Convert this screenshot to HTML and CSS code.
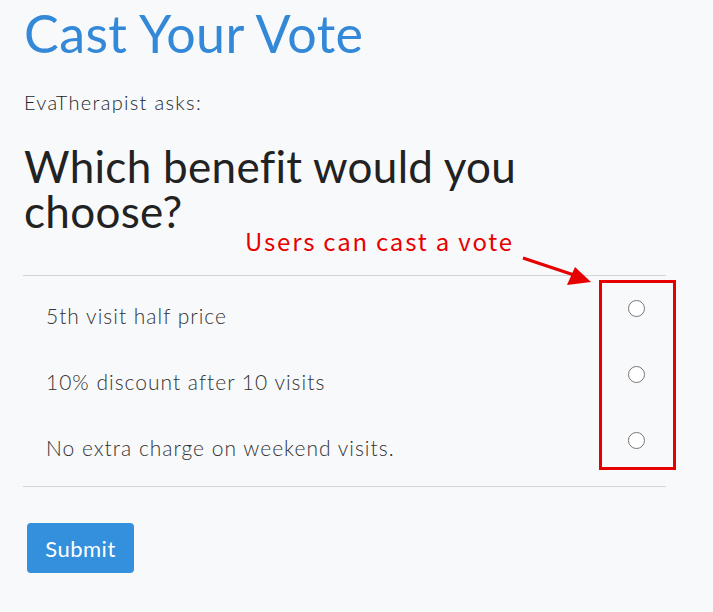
FILE: index.html
```html
<!DOCTYPE html>
<html>
<head>
<meta charset="utf-8">
<link rel="stylesheet" href="styles.css">
</head>
<body>
<div class="page">
  <h1 class="title">Cast Your Vote</h1>
  <p class="asker">EvaTherapist asks:</p>
  <h2 class="question"><span class="q-line">Which benefit would you</span> <span class="q-line">choose?</span></h2>
  <div class="options">
    <label class="option"><span class="opt-text">5th visit half price</span><span class="radio"></span></label>
    <label class="option"><span class="opt-text">10% discount after 10 visits</span><span class="radio"></span></label>
    <label class="option"><span class="opt-text">No extra charge on weekend visits.</span><span class="radio"></span></label>
  </div>
  <button class="submit">Submit</button>

  <div class="note">Users can cast a vote</div>
  <svg class="arrow" width="80" height="40" viewBox="0 0 80 40">
    <line x1="2" y1="2" x2="56" y2="20" stroke="#e60000" stroke-width="3"/>
    <polygon points="70,26 46,29 54,11" fill="#e60000"/>
  </svg>
  <div class="callout"></div>
</div>
</body>
</html>
```
FILE: styles.css
```css
html, body {
  margin: 0;
  padding: 0;
  background: #f8f9fa;
}
body {
  font-family: Lato, "Open Sans", sans-serif;
  color: #212529;
  width: 713px;
  height: 612px;
  overflow: hidden;
}
.page {
  position: relative;
  padding: 0 47px 0 23px;
}
.title {
  margin: 0;
  padding-top: 2px;
  font-weight: 400;
  font-size: 52px;
  line-height: 62px;
  color: #3488d8;
  letter-spacing: 0.4px;
  padding-left: 1px;
}
.asker {
  margin: 26px 0 0 1px;
  font-size: 20px;
  line-height: 24px;
  font-weight: 300;
  letter-spacing: 1.3px;
}
.question {
  margin: 30px 0 0 1px;
  font-weight: 400;
  font-size: 44px;
  line-height: 45px;
  color: #222;
  letter-spacing: 0.3px;
}
.q-line {
  display: block;
  width: max-content;
}
.options {
  margin-top: 41px;
  border-top: 1px solid #d2d4d6;
  border-bottom: 1px solid #d2d4d6;
  padding: 6px 0;
}
.option {
  display: flex;
  align-items: center;
  justify-content: space-between;
  height: 66px;
  padding-left: 23px;
  padding-right: 21px;
}
.opt-text {
  font-size: 21px;
  font-weight: 300;
  color: #333;
  letter-spacing: 1px;
}
.radio {
  width: 17px;
  height: 17px;
  box-sizing: border-box;
  border: 1px solid #767676;
  border-radius: 50%;
  background: #fff;
  margin-top: -14px;
}
.submit {
  margin: 36px 0 0 4px;
  width: 107px;
  height: 50px;
  border: none;
  border-radius: 4px;
  background: #3490dc;
  color: #fff;
  font-family: Lato, sans-serif;
  font-size: 22px;
  letter-spacing: 0.5px;
  padding: 0;
}
.note {
  position: absolute;
  left: 245px;
  top: 224px;
  font-family: "Noto Sans CJK JP", sans-serif;
  color: #e60000;
  font-size: 24px;
  line-height: 34px;
  letter-spacing: 1.8px;
}
.arrow {
  position: absolute;
  left: 521px;
  top: 256px;
}
.callout {
  position: absolute;
  left: 599px;
  top: 280px;
  width: 71px;
  height: 184px;
  border: 3px solid #e60000;
}
```
